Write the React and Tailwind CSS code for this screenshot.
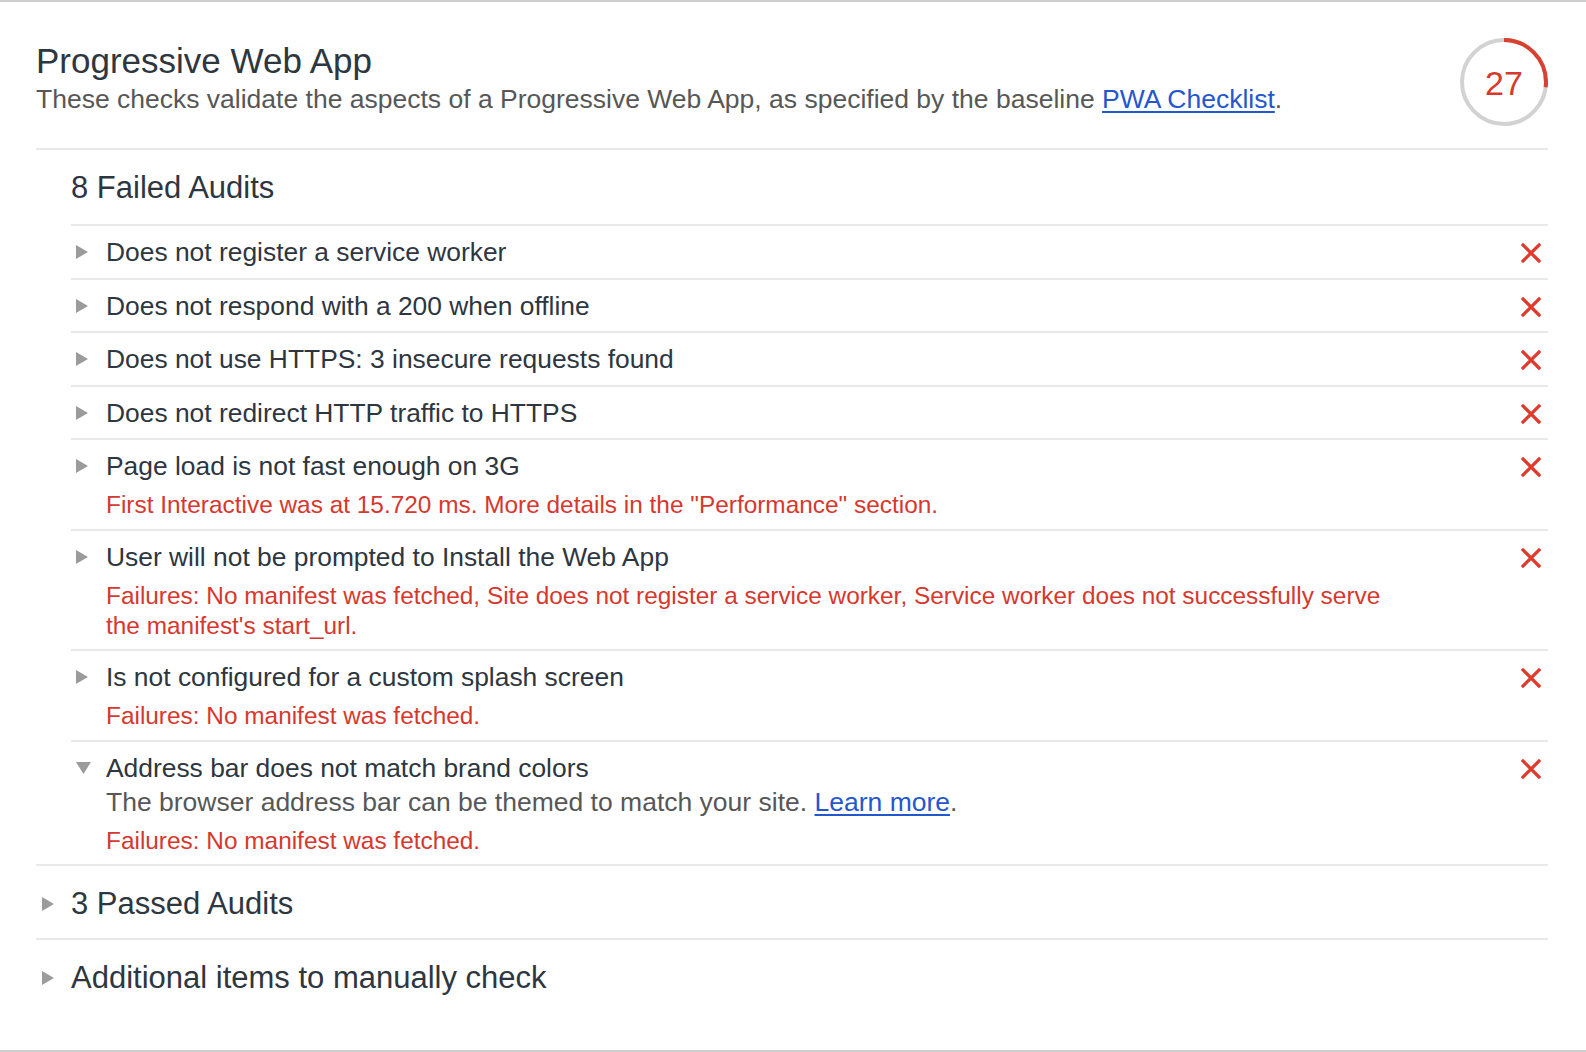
import React from "react";

const TITLE = "text-[#2e3640]";

function Tri({ open }) {
  return open ? (
    <svg width="15" height="12" viewBox="0 0 15 12">
      <polygon points="0,0 15,0 7.5,12" fill="#9b9b9b" />
    </svg>
  ) : (
    <svg width="12" height="14" viewBox="0 0 12 14">
      <polygon points="0,0 12,7 0,14" fill="#9b9b9b" />
    </svg>
  );
}

function XIcon() {
  return (
    <svg width="20" height="20" viewBox="0 0 20 20">
      <path d="M2 2 L18 18 M18 2 L2 18" stroke="#e03a2c" strokeWidth="3.2" strokeLinecap="square" fill="none" />
    </svg>
  );
}

function Audit({ title, desc, sub, open, pb }) {
  return (
    <div className={`flex border-t-2 border-[#e9e9e9] pt-[9px] ${pb}`}>
      <div className="w-[35px] h-[34px] shrink-0 flex items-center pl-[5px]">
        <Tri open={open} />
      </div>
      <div className="flex-1 min-w-0">
        <div className={`text-[26.4px] leading-[34px] ${TITLE}`}>{title}</div>
        {desc && <div className="text-[26.5px] leading-[34px] text-[#575757]">{desc}</div>}
        {sub && <div className="mt-[7px] text-[24.4px] leading-[30px] text-[#d6382e]">{sub}</div>}
      </div>
      <div className="w-[20px] h-[34px] shrink-0 flex items-center mr-[7px] ml-4 pt-[2px]">
        <XIcon />
      </div>
    </div>
  );
}

function Gauge() {
  const r = 42;
  const c = 2 * Math.PI * r;
  const v = 0.27 * c;
  return (
    <div className="relative w-[88px] h-[88px] shrink-0 mt-[36px]">
      <svg width="88" height="88" viewBox="0 0 88 88">
        <circle cx="44" cy="44" r={r} fill="none" stroke="#d2d2d2" strokeWidth="4" />
        <circle
          cx="44"
          cy="44"
          r={r}
          fill="none"
          stroke="#d8412f"
          strokeWidth="4"
          strokeDasharray={`${v} ${c}`}
          transform="rotate(-90 44 44)"
        />
      </svg>
      <div className="absolute inset-0 flex items-center justify-center text-[34px] leading-none text-[#d63a2e] pt-[2px]">
        27
      </div>
    </div>
  );
}

function GroupHeader({ label, collapsible, h, pt }) {
  return (
    <div className={`${h} ${pt} border-t-2 border-[#e9e9e9] flex items-center`}>
      <div className="w-[35px] shrink-0 flex items-center pl-[6px]">{collapsible && <Tri />}</div>
      <div className={`text-[31px] leading-[36px] ${TITLE}`}>{label}</div>
    </div>
  );
}

export default function App() {
  return (
    <div className="w-[1586px] h-[1052px] bg-white border-t-2 border-b-2 border-[#cfcfcf] font-['Liberation_Sans',Arial,sans-serif] flex flex-col overflow-hidden">
      <div className="pl-[36px] pr-[38px]">
        <div className="flex justify-between">
          <div className="pt-[38px] pb-[31px]">
            <div className={`text-[35px] leading-[42px] ${TITLE}`}>Progressive Web App</div>
            <div className="text-[26.5px] leading-[35px] text-[#575757]">
              These checks validate the aspects of a Progressive Web App, as specified by the baseline{" "}
              <a className="text-[#2457cd] underline underline-offset-[3px]">PWA Checklist</a>.
            </div>
          </div>
          <Gauge />
        </div>

        <GroupHeader label="8 Failed Audits" h="h-[76px]" pt="pt-[2px]" />
        <div className="ml-[35px]">
          <Audit title="Does not register a service worker" pb="pb-[8.5px]" />
          <Audit title="Does not respond with a 200 when offline" pb="pb-[8.5px]" />
          <Audit title="Does not use HTTPS: 3 insecure requests found" pb="pb-[8.5px]" />
          <Audit title="Does not redirect HTTP traffic to HTTPS" pb="pb-[8.5px]" />
          <Audit
            title="Page load is not fast enough on 3G"
            sub={'First Interactive was at 15.720 ms. More details in the "Performance" section.'}
            pb="pb-[9px]"
          />
          <Audit
            title="User will not be prompted to Install the Web App"
            sub={
              <>
                Failures: No manifest was fetched, Site does not register a service worker, Service worker does not successfully serve
                <br />
                the manifest's start_url.
              </>
            }
            pb="pb-[8px]"
          />
          <Audit title="Is not configured for a custom splash screen" sub="Failures: No manifest was fetched." pb="pb-[9px]" />
          <Audit
            open
            title="Address bar does not match brand colors"
            desc={
              <>
                The browser address bar can be themed to match your site.{" "}
                <a className="text-[#2457cd] underline underline-offset-[3px]">Learn more</a>.
              </>
            }
            sub="Failures: No manifest was fetched."
            pb="pb-[8px]"
          />
        </div>
        <GroupHeader label="3 Passed Audits" collapsible h="h-[74px]" pt="pt-[3px]" />
        <GroupHeader label="Additional items to manually check" collapsible h="h-[74px]" pt="pt-[3px]" />
      </div>
    </div>
  );
}
